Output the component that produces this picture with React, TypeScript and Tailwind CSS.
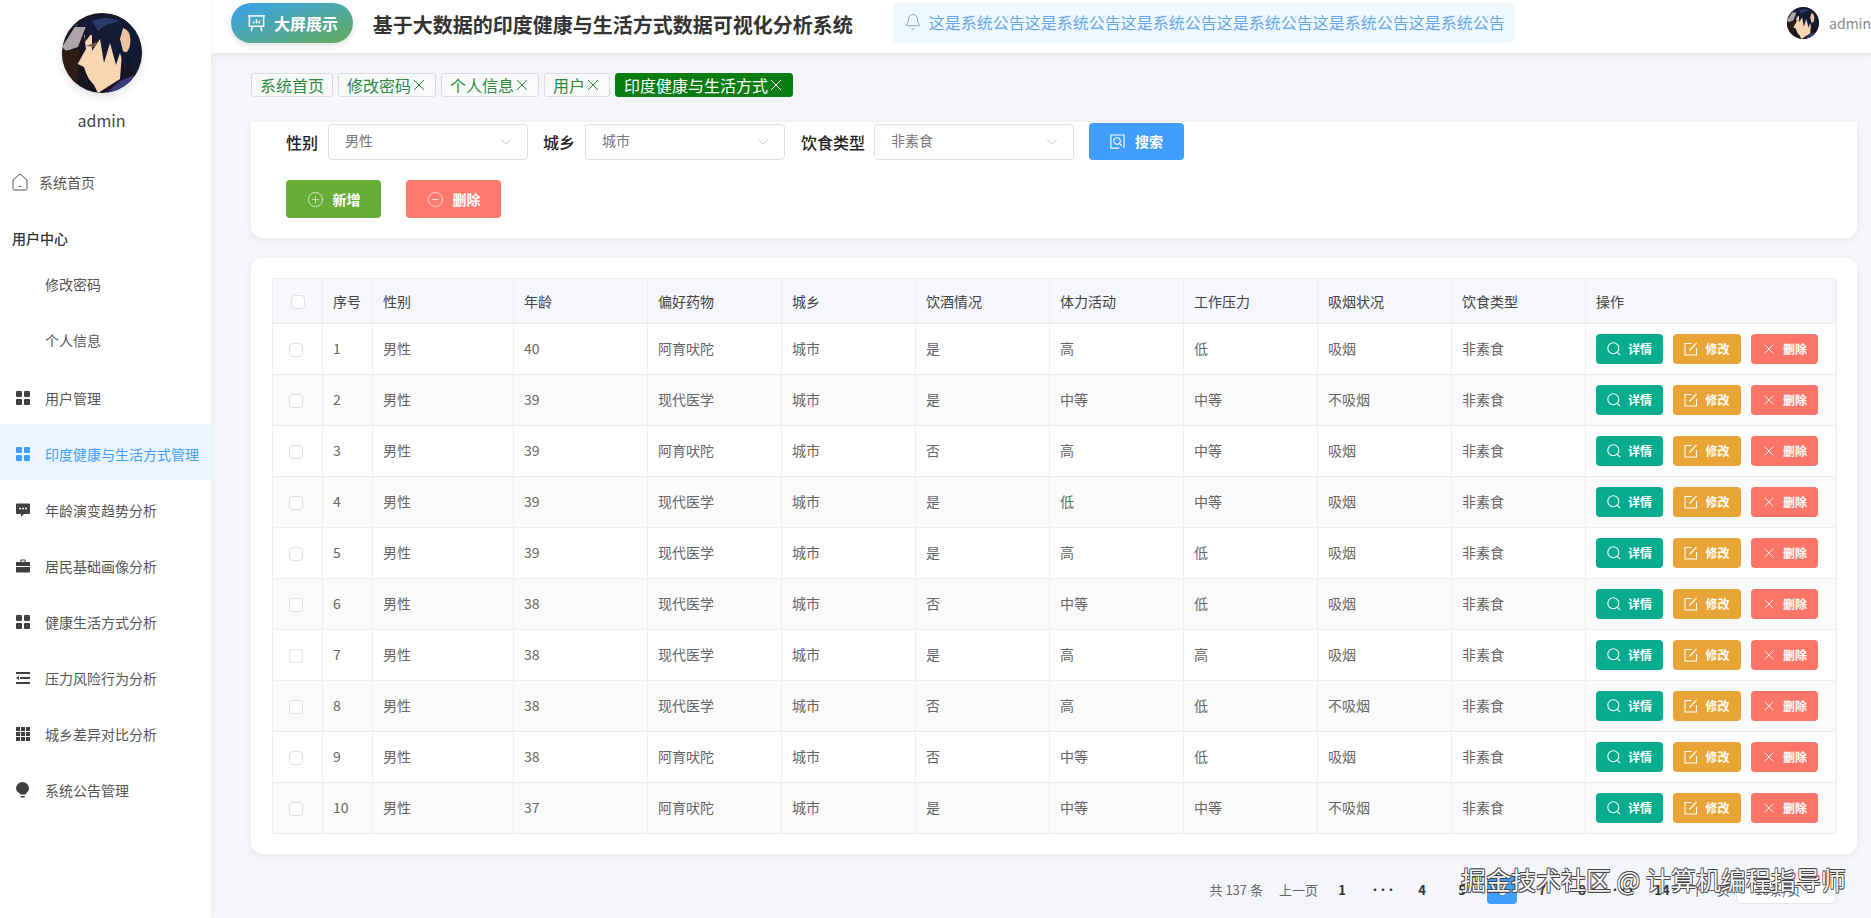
import { Bell, ChevronDown, CirclePlus, CircleMinus } from 'lucide-react';

const rows = [
  ['40', '阿育吠陀', '是', '高', '低', '吸烟'],
  ['39', '现代医学', '是', '中等', '中等', '不吸烟'],
  ['39', '阿育吠陀', '否', '高', '中等', '吸烟'],
  ['39', '现代医学', '是', '低', '中等', '吸烟'],
  ['39', '现代医学', '是', '高', '低', '吸烟'],
  ['38', '现代医学', '否', '中等', '低', '吸烟'],
  ['38', '现代医学', '是', '高', '高', '吸烟'],
  ['38', '现代医学', '否', '高', '低', '不吸烟'],
  ['38', '阿育吠陀', '否', '中等', '低', '吸烟'],
  ['37', '阿育吠陀', '是', '中等', '中等', '不吸烟'],
];

const headers = ['性别', '年龄', '偏好药物', '城乡', '饮酒情况', '体力活动', '工作压力', '吸烟状况', '饮食类型', '操作'];

const Avatar = ({ className }: { className: string }) => (
  <svg viewBox="0 0 80 80" className={`rounded-full ${className}`}>
    <rect width="80" height="80" fill="#181420" />
    <path d="M0 34 L14 12 L26 8 L16 34 L4 38Z" fill="#aaa5a6" />
    <path d="M0 38 L18 36 L14 80 L0 80Z" fill="#2e1c15" />
    <path d="M22 22 L50 22 L60 40 L58 66 L36 80 L32 72 L27 66 L24 60 L22 54 L15.700 51 L24 36Z" fill="#f8d6b2" />
    <path d="M44 80 L58 68 L72 62 L66 80Z" fill="#3a3a7c" />
    <path d="M12 14 Q35 -4 62 3 Q80 14 80 42 L74 62 L66 44 L64 60 L58 40 L54 52 L48 30 L42 50 L38 26 L30 38 L30 20 L22 30 L24 14Z" fill="#141a33" />
    <path d="M30 8 Q44 2 58 8 L44 12 L36 18Z" fill="#2c3a6a" />
    <path d="M61 15 Q70 18 68 32 Q66 42 61 38 L58 26Z" fill="#eec4a0" />
    <path d="M24 33 L35 29 L33 34Z" fill="#6b5a50" />
  </svg>
);

const IconHome = () => (
  <svg viewBox="0 0 16 18" className="w-4 h-[18px] shrink-0" fill="none" stroke="#555" strokeWidth="1">
    <path d="M1 7 L8 1 L15 7 V15.5 Q15 17 13.500 17 H2.500 Q1 17 1 15.500Z" />
    <path d="M6.500 13.500 H9.500" />
  </svg>
);

const IconMenu = ({ color = '#3f3f3f' }: { color?: string }) => (
  <svg viewBox="0 0 14 14" className="w-3.5 h-3.5 shrink-0" fill={color}>
    <rect x="0" y="0" width="6" height="6" rx="1" />
    <rect x="8" y="0" width="6" height="6" rx="1" />
    <rect x="0" y="8" width="6" height="6" rx="1" />
    <rect x="8" y="8" width="6" height="6" rx="1" />
  </svg>
);

const IconChat = () => (
  <svg viewBox="0 0 14 14" className="w-3.5 h-3.5 shrink-0">
    <path d="M1 0.500 H13 Q14 0.500 14 1.500 V10 Q14 11 13 11 H8 L5 13.800 V11 H1 Q0 11 0 10 V1.500 Q0 0.500 1 0.500Z" fill="#3f3f3f" />
    <circle cx="4" cy="5.500" r="1" fill="#fff" />
    <circle cx="7" cy="5.500" r="1" fill="#fff" />
    <circle cx="10" cy="5.500" r="1" fill="#fff" />
  </svg>
);

const IconCase = () => (
  <svg viewBox="0 0 14 14" className="w-3.5 h-3.5 shrink-0" fill="#3f3f3f">
    <path d="M4.500 3 V0.500 H9.500 V3 H8.500 V1.500 H5.500 V3Z" />
    <path d="M0 3 H14 V7 H0Z" />
    <path d="M0 8 H14 V13.500 H0Z" />
  </svg>
);

const IconLines = () => (
  <svg viewBox="0 0 14 14" className="w-3.5 h-3.5 shrink-0" fill="#3f3f3f">
    <rect x="0" y="1" width="14" height="2" />
    <rect x="4" y="6" width="10" height="2" />
    <rect x="0" y="11" width="14" height="2" />
    <path d="M0 7 L3 5 V9Z" />
  </svg>
);

const IconGrid = () => (
  <svg viewBox="0 0 14 14" className="w-3.5 h-3.5 shrink-0" fill="#3f3f3f">
    {[0, 5, 10].map((y) =>
      [0, 5, 10].map((x) => <rect key={`${x}-${y}`} x={x} y={y} width="4" height="4" />),
    )}
  </svg>
);

const IconBulb = () => (
  <svg viewBox="0 0 14 16" className="w-3.5 h-4 shrink-0" fill="#3f3f3f">
    <path d="M6.500 0 A6.500 6.500 0 0 1 13 6.500 Q13 9.500 10 11.500 V12.500 H4 V11.500 Q0 9.500 0 6.500 A6.500 6.500 0 0 1 6.500 0Z" />
    <rect x="4.500" y="14" width="4.500" height="1.500" rx="0.700" />
  </svg>
);

const IconScreen = () => (
  <svg viewBox="0 0 20 20" className="w-[19px] h-[19px] shrink-0" fill="none" stroke="#fff" strokeWidth="1.600">
    <path d="M1 2 H19" />
    <path d="M2.500 2 V13 H17.500 V2" />
    <path d="M5.500 13 L4.500 18 M14.500 13 L15.500 18" />
    <path d="M7 10 V8 M10 10 V5.500 M13 10 V7" />
  </svg>
);

const IconSearchBox = () => (
  <svg viewBox="0 0 16 16" className="w-[15px] h-[15px] shrink-0" fill="none" stroke="#fff" strokeWidth="1.200">
    <path d="M10 15 H1 V1 H15 V15" />
    <circle cx="7.500" cy="7.500" r="3.500" />
    <path d="M10 10 L13 13" />
  </svg>
);

const IconClose = ({ className }: { className: string }) => (
  <svg viewBox="0 0 16 16" className={`shrink-0 ${className}`} fill="none" stroke="currentColor" strokeWidth="1">
    <path d="M3 3 L13 13 M13 3 L3 13" />
  </svg>
);

const IconFind = () => (
  <svg viewBox="0 0 14 14" className="w-3.5 h-3.5 shrink-0" fill="none" stroke="currentColor" strokeWidth="1.100">
    <circle cx="6.300" cy="6.300" r="5.500" />
    <path d="M10.300 10.300 L13.200 13.200" />
  </svg>
);

const IconEdit = () => (
  <svg viewBox="0 0 14 14" className="w-3.5 h-3.5 shrink-0" fill="none" stroke="currentColor" strokeWidth="1.100">
    <path d="M7.500 1.500 H1 V13 H12.500 V6" />
    <path d="M5.500 8.500 L12.500 1" />
  </svg>
);

const navItems = [
  { label: '用户管理', icon: <IconMenu /> },
  { label: '印度健康与生活方式管理', icon: <IconMenu color="#409eff" />, active: true },
  { label: '年龄演变趋势分析', icon: <IconChat /> },
  { label: '居民基础画像分析', icon: <IconCase /> },
  { label: '健康生活方式分析', icon: <IconMenu /> },
  { label: '压力风险行为分析', icon: <IconLines /> },
  { label: '城乡差异对比分析', icon: <IconGrid /> },
  { label: '系统公告管理', icon: <IconBulb /> },
];

const Sidebar = () => (
  <aside className="w-[211px] shrink-0 bg-white z-20 shadow-[1px_0_6px_rgba(0,0,0,0.04)] flex flex-col text-[14px] text-[#555]">
    <div className="flex flex-col items-center pt-[13px] pr-2">
      <Avatar className="w-20 h-20 shadow-[0_4px_10px_rgba(0,0,0,0.12)]" />
      <div className="mt-[15px] leading-6 text-[16px] text-[#444]">admin</div>
    </div>
    <nav className="mt-[22px]">
      <div className="h-14 pl-3 flex items-center gap-[11px]">
        <IconHome />
        <span>系统首页</span>
      </div>
      <div className="h-[46px] pl-3 pt-2.5 flex items-center font-medium text-[#333]">用户中心</div>
      <div className="h-14 pl-[45px] flex items-center">修改密码</div>
      <div className="h-14 pl-[45px] flex items-center">个人信息</div>
      {navItems.map((item) => (
        <div
          key={item.label}
          className={`h-14 pt-1 pl-4 flex items-center gap-[15px] ${item.active ? 'bg-[#ecf5ff] text-[#409eff]' : ''}`}
        >
          {item.icon}
          <span>{item.label}</span>
        </div>
      ))}
    </nav>
  </aside>
);

const Header = () => (
  <header className="h-[53px] shrink-0 bg-white z-10 shadow-[0_2px_8px_rgba(0,0,0,0.07)] flex items-start pl-5 pt-[3px] overflow-hidden whitespace-nowrap">
    <div className="w-[122px] h-10 rounded-[20px] bg-gradient-to-br from-[#38a0ec] to-[#66aa55] flex items-center pl-4 gap-2 text-white font-bold text-[16px] shadow-[0_3px_6px_rgba(0,0,0,0.12)]">
      <IconScreen />
      <span>大屏展示</span>
    </div>
    <h1 className="ml-5 h-10 leading-[44px] text-[20px] font-bold text-[#333]">基于大数据的印度健康与生活方式数据可视化分析系统</h1>
    <div className="ml-10 w-[623px] h-10 bg-[#eef9ff] rounded flex items-center pl-[11px] pb-0.5 gap-[7px] text-[16px] text-[#66a6ea]">
      <Bell size={18} strokeWidth={1} color="#6a8aaa" />
      <span>这是系统公告这是系统公告这是系统公告这是系统公告这是系统公告这是系统公告</span>
    </div>
    <div className="ml-[273px] flex items-center gap-2.5 pt-1 text-[14px] text-[#888]">
      <Avatar className="w-8 h-8" />
      <span>admin</span>
    </div>
  </header>
);

const tabs = ['系统首页', '修改密码', '个人信息', '用户', '印度健康与生活方式'];

const TabBar = () => (
  <div className="flex gap-[5px] h-6 mt-5 text-[16px] leading-[22px]">
    {tabs.map((tab, i) => {
      const active = i === tabs.length - 1;
      return (
        <div
          key={tab}
          className={`h-6 flex items-center px-2 rounded-[3px] border ${active ? 'bg-[#0a7d12] border-[#0a7d12] text-white' : 'bg-[#f8fafb] border-[#d9dde3] text-[#2e8b3c]'}`}
        >
          <span>{tab}</span>
          {i > 0 && <IconClose className="w-4 h-4" />}
        </div>
      );
    })}
  </div>
);

const SelectBox = ({ value, width }: { value: string; width: string }) => (
  <div className={`${width} h-9 shrink-0 rounded border border-[#dcdfe6] bg-white flex items-center justify-between pl-4 pr-3 text-[14px] font-normal text-[#777]`}>
    <span className="pb-0.5">{value}</span>
    <ChevronDown size={18} strokeWidth={1} color="#b0b4bc" />
  </div>
);

const FilterCard = () => (
  <section className="mt-[25px] h-[116px] shrink-0 bg-white rounded-b-xl shadow-[0_2px_10px_rgba(0,0,0,0.06)] pl-[35px] pt-px">
    <div className="flex items-center h-[37px] text-[16px] font-medium text-[#222] whitespace-nowrap">
      <span className="w-8">性别</span>
      <SelectBox value="男性" width="w-[200px] ml-2.5" />
      <span className="ml-[15px] w-8">城乡</span>
      <SelectBox value="城市" width="w-[200px] ml-2.5" />
      <span className="ml-4 w-16">饮食类型</span>
      <SelectBox value="非素食" width="w-[200px] ml-[9px]" />
      <button className="ml-[15px] w-[95px] h-[37px] rounded bg-[#409eff] text-white text-[14px] font-bold flex items-center justify-center gap-2.5">
        <IconSearchBox />
        <span>搜索</span>
      </button>
    </div>
    <div className="flex gap-[25px] mt-5">
      <button className="w-[95px] h-[38px] rounded bg-[#67ae37] text-white text-[14px] font-bold flex items-center justify-center gap-[9px]">
        <CirclePlus size={17} strokeWidth={1} />
        <span>新增</span>
      </button>
      <button className="w-[95px] h-[38px] rounded bg-[#fd7a6d] text-white text-[14px] font-bold flex items-center justify-center gap-[9px]">
        <CircleMinus size={17} strokeWidth={1} />
        <span>删除</span>
      </button>
    </div>
  </section>
);

const cell = 'border border-[#ebeef5] px-2.5 pb-0.5';

const DataTable = () => (
  <section className="mt-5 h-[596px] shrink-0 bg-white rounded-xl shadow-[0_2px_10px_rgba(0,0,0,0.06)] p-5 pl-[21px]">
    <table className="w-[1564px] table-fixed border-collapse text-[14px] text-[#666]">
      <colgroup>
        <col className="w-[50px]" />
        <col className="w-[50px]" />
        <col className="w-[141px]" />
        {[0, 1, 2, 3, 4, 5, 6, 7].map((i) => (
          <col key={i} className="w-[134px]" />
        ))}
        <col className="w-[251px]" />
      </colgroup>
      <thead>
        <tr className="h-[45px] bg-[#f5f7fb] text-[#444]">
          <th className="border border-[#ebeef5] pl-[18px] text-left font-normal">
            <div className="mt-0.5 w-3.5 h-3.5 border border-[#dcdfe6] rounded-sm bg-white" />
          </th>
          <th className="border border-[#ebeef5] px-2.5 text-left font-normal">序号</th>
          {headers.map((h) => (
            <th key={h} className="border border-[#ebeef5] px-2.5 text-left font-normal">
              {h}
            </th>
          ))}
        </tr>
      </thead>
      <tbody>
        {rows.map((row, i) => (
          <tr key={i} className={`h-[51px] ${i % 2 === 1 ? 'bg-[#fafafa]' : 'bg-white'}`}>
            <td className="border border-[#ebeef5] pl-4">
              <div className="mt-0.5 w-3.5 h-3.5 border border-[#dcdfe6] rounded-sm bg-white" />
            </td>
            <td className={cell}>{i + 1}</td>
            <td className={cell}>男性</td>
            <td className={cell}>{row[0]}</td>
            <td className={cell}>{row[1]}</td>
            <td className={cell}>城市</td>
            <td className={cell}>{row[2]}</td>
            <td className={cell}>{row[3]}</td>
            <td className={cell}>{row[4]}</td>
            <td className={cell}>{row[5]}</td>
            <td className={cell}>非素食</td>
            <td className="border border-[#ebeef5] pl-2.5">
              <div className="flex gap-2.5 text-white text-[12px] font-bold">
                <button className="w-[67px] h-[30px] rounded bg-[#07ab8e] flex items-center justify-center gap-[7px]">
                  <IconFind />
                  <span>详情</span>
                </button>
                <button className="w-[68px] h-[30px] rounded bg-[#e9a437] flex items-center justify-center gap-[7px]">
                  <IconEdit />
                  <span>修改</span>
                </button>
                <button className="w-[67px] h-[30px] rounded bg-[#fd7567] flex items-center justify-center gap-[7px]">
                  <IconClose className="w-3.5 h-3.5" />
                  <span>删除</span>
                </button>
              </div>
            </td>
          </tr>
        ))}
      </tbody>
    </table>
  </section>
);

const pages = ['1', '•••', '4', '5', '6', '7', '8', '•••', '14'];

const Pagination = () => (
  <div className="mt-[21px] h-[29px] shrink-0 flex items-center justify-end pr-[21px] text-[13px] text-[#666]">
    <span>共 137 条</span>
    <span className="ml-4">上一页</span>
    <div className="ml-1 flex font-bold text-[#303133]">
      {pages.map((p, i) => (
        <div
          key={i}
          className={`w-[30px] h-[29px] mx-[5px] flex items-center justify-center rounded-sm ${p === '6' ? 'bg-[#409eff] text-white' : ''} ${p === '•••' ? 'text-[10px] tracking-[-2px]' : ''}`}
        >
          {p}
        </div>
      ))}
    </div>
    <span className="ml-[9px]">下一页</span>
    <div className="ml-[6px] w-[100px] h-[29px] rounded border border-[#e4e7ed] bg-white flex items-center justify-between px-[18px]">
      <span>10条/页</span>
      <ChevronDown size={14} strokeWidth={1} color="#b0b4bc" />
    </div>
  </div>
);

const App = () => (
  <div className="relative w-[1871px] h-[918px] overflow-hidden flex bg-[#f4f6fa] font-['Noto_Sans_CJK_SC',sans-serif]">
    <Sidebar />
    <main className="flex-1 min-w-0 flex flex-col">
      <Header />
      <div className="flex-1 min-h-0 flex flex-col pl-10 pr-3.5">
        <TabBar />
        <FilterCard />
        <DataTable />
        <Pagination />
      </div>
    </main>
    <div className="absolute left-[1461px] top-[863px] z-30 text-[25px] leading-8 whitespace-nowrap text-[#f6f6f6] [text-shadow:0.7px_0.7px_0_#444,-0.7px_-0.7px_0_#444,0.7px_-0.7px_0_#444,-0.7px_0.7px_0_#444]">
      掘金技术社区 @ 计算机编程指导师
    </div>
  </div>
);

export default App;
